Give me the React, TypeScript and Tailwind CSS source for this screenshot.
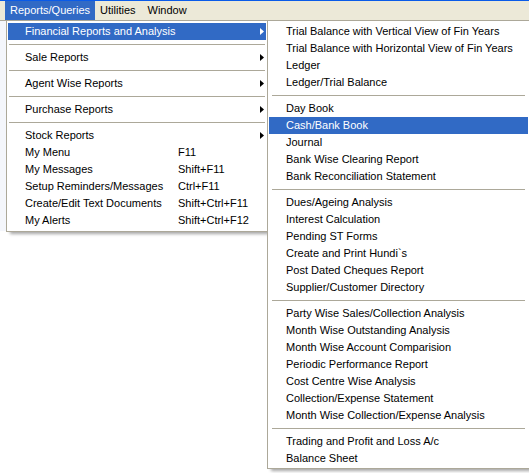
import React from 'react';

type Entry = { label: string; shortcut?: string; sub?: boolean; active?: boolean } | 'sep';

const mainItems: Entry[] = [
  { label: 'Financial Reports and Analysis', sub: true, active: true },
  'sep',
  { label: 'Sale Reports', sub: true },
  'sep',
  { label: 'Agent Wise Reports', sub: true },
  'sep',
  { label: 'Purchase Reports', sub: true },
  'sep',
  { label: 'Stock Reports', sub: true },
  { label: 'My Menu', shortcut: 'F11' },
  { label: 'My Messages', shortcut: 'Shift+F11' },
  { label: 'Setup Reminders/Messages', shortcut: 'Ctrl+F11' },
  { label: 'Create/Edit Text Documents', shortcut: 'Shift+Ctrl+F11' },
  { label: 'My Alerts', shortcut: 'Shift+Ctrl+F12' },
];

const subItems: Entry[] = [
  { label: 'Trial Balance with Vertical View of Fin Years' },
  { label: 'Trial Balance with Horizontal View of Fin Years' },
  { label: 'Ledger' },
  { label: 'Ledger/Trial Balance' },
  'sep',
  { label: 'Day Book' },
  { label: 'Cash/Bank Book', active: true },
  { label: 'Journal' },
  { label: 'Bank Wise Clearing Report' },
  { label: 'Bank Reconciliation Statement' },
  'sep',
  { label: 'Dues/Ageing Analysis' },
  { label: 'Interest Calculation' },
  { label: 'Pending ST Forms' },
  { label: 'Create and Print Hundi`s' },
  { label: 'Post Dated Cheques Report' },
  { label: 'Supplier/Customer Directory' },
  'sep',
  { label: 'Party Wise Sales/Collection Analysis' },
  { label: 'Month Wise Outstanding Analysis' },
  { label: 'Month Wise Account Comparision' },
  { label: 'Periodic Performance Report' },
  { label: 'Cost Centre Wise Analysis' },
  { label: 'Collection/Expense Statement' },
  { label: 'Month Wise Collection/Expense Analysis' },
  'sep',
  { label: 'Trading and Profit and Loss A/c' },
  { label: 'Balance Sheet' },
];

const Arrow: React.FC<{ light?: boolean }> = ({ light }) => (
  <svg width="4" height="7" viewBox="0 0 4 7" className="shrink-0">
    <path d="M0 0L4 3.5L0 7Z" fill={light ? '#ffffff' : '#000000'} />
  </svg>
);

const MenuList: React.FC<{ items: Entry[]; sepInset: string; shortcutCol?: boolean }> = ({ items, sepInset, shortcutCol }) => (
  <>
    {items.map((it, i) =>
      it === 'sep' ? (
        <div key={i} className="h-[9px] flex items-center">
          <div className={`h-px flex-1 bg-[#aca899] ${sepInset}`} />
        </div>
      ) : (
        <div
          key={i}
          className={`h-[17px] flex items-center pl-[17px] pr-[2px] ${it.active ? 'bg-[#316ac5] text-white' : 'text-black'}`}
        >
          <span className={shortcutCol ? 'w-[153px] whitespace-nowrap' : 'flex-1 whitespace-nowrap'}>{it.label}</span>
          {shortcutCol && <span className="flex-1 whitespace-nowrap">{it.shortcut ?? ''}</span>}
          {it.sub && <Arrow light={it.active} />}
        </div>
      )
    )}
  </>
);

export default function App() {
  return (
    <div
      className="relative w-[529px] h-[473px] overflow-hidden bg-white text-[11px] leading-none"
      style={{ fontFamily: '"Liberation Sans", Arial, sans-serif' }}
    >
      <div className="h-px bg-[#0a5be8]" />
      <div className="h-[19px] bg-[#ece9d8] flex items-stretch pl-[5px]">
        <div className="px-[5px] flex items-center bg-[#316ac5] text-white">Reports/Queries</div>
        <div className="px-[5px] flex items-center text-black">Utilities</div>
        <div className="px-[7px] flex items-center text-black">Window</div>
      </div>
      <div className="h-px bg-[#aca899]" />
      <div className="h-[210px] bg-[#f4f6fb]" />

      <div className="absolute left-[6px] top-[20px] w-[262px] border border-[#aca899] bg-white pt-[2px] pb-[2px] px-px shadow-[3px_3px_3px_-1px_rgba(0,0,0,0.35)]">
        <MenuList items={mainItems} sepInset="mx-px" shortcutCol />
      </div>

      <div className="absolute left-[267px] top-[20px] w-[263px] border border-[#aca899] bg-white pt-[2px] pb-[1px] px-px shadow-[3px_3px_3px_-1px_rgba(0,0,0,0.35)]">
        <MenuList items={subItems} sepInset="mx-[3px]" />
      </div>
    </div>
  );
}
